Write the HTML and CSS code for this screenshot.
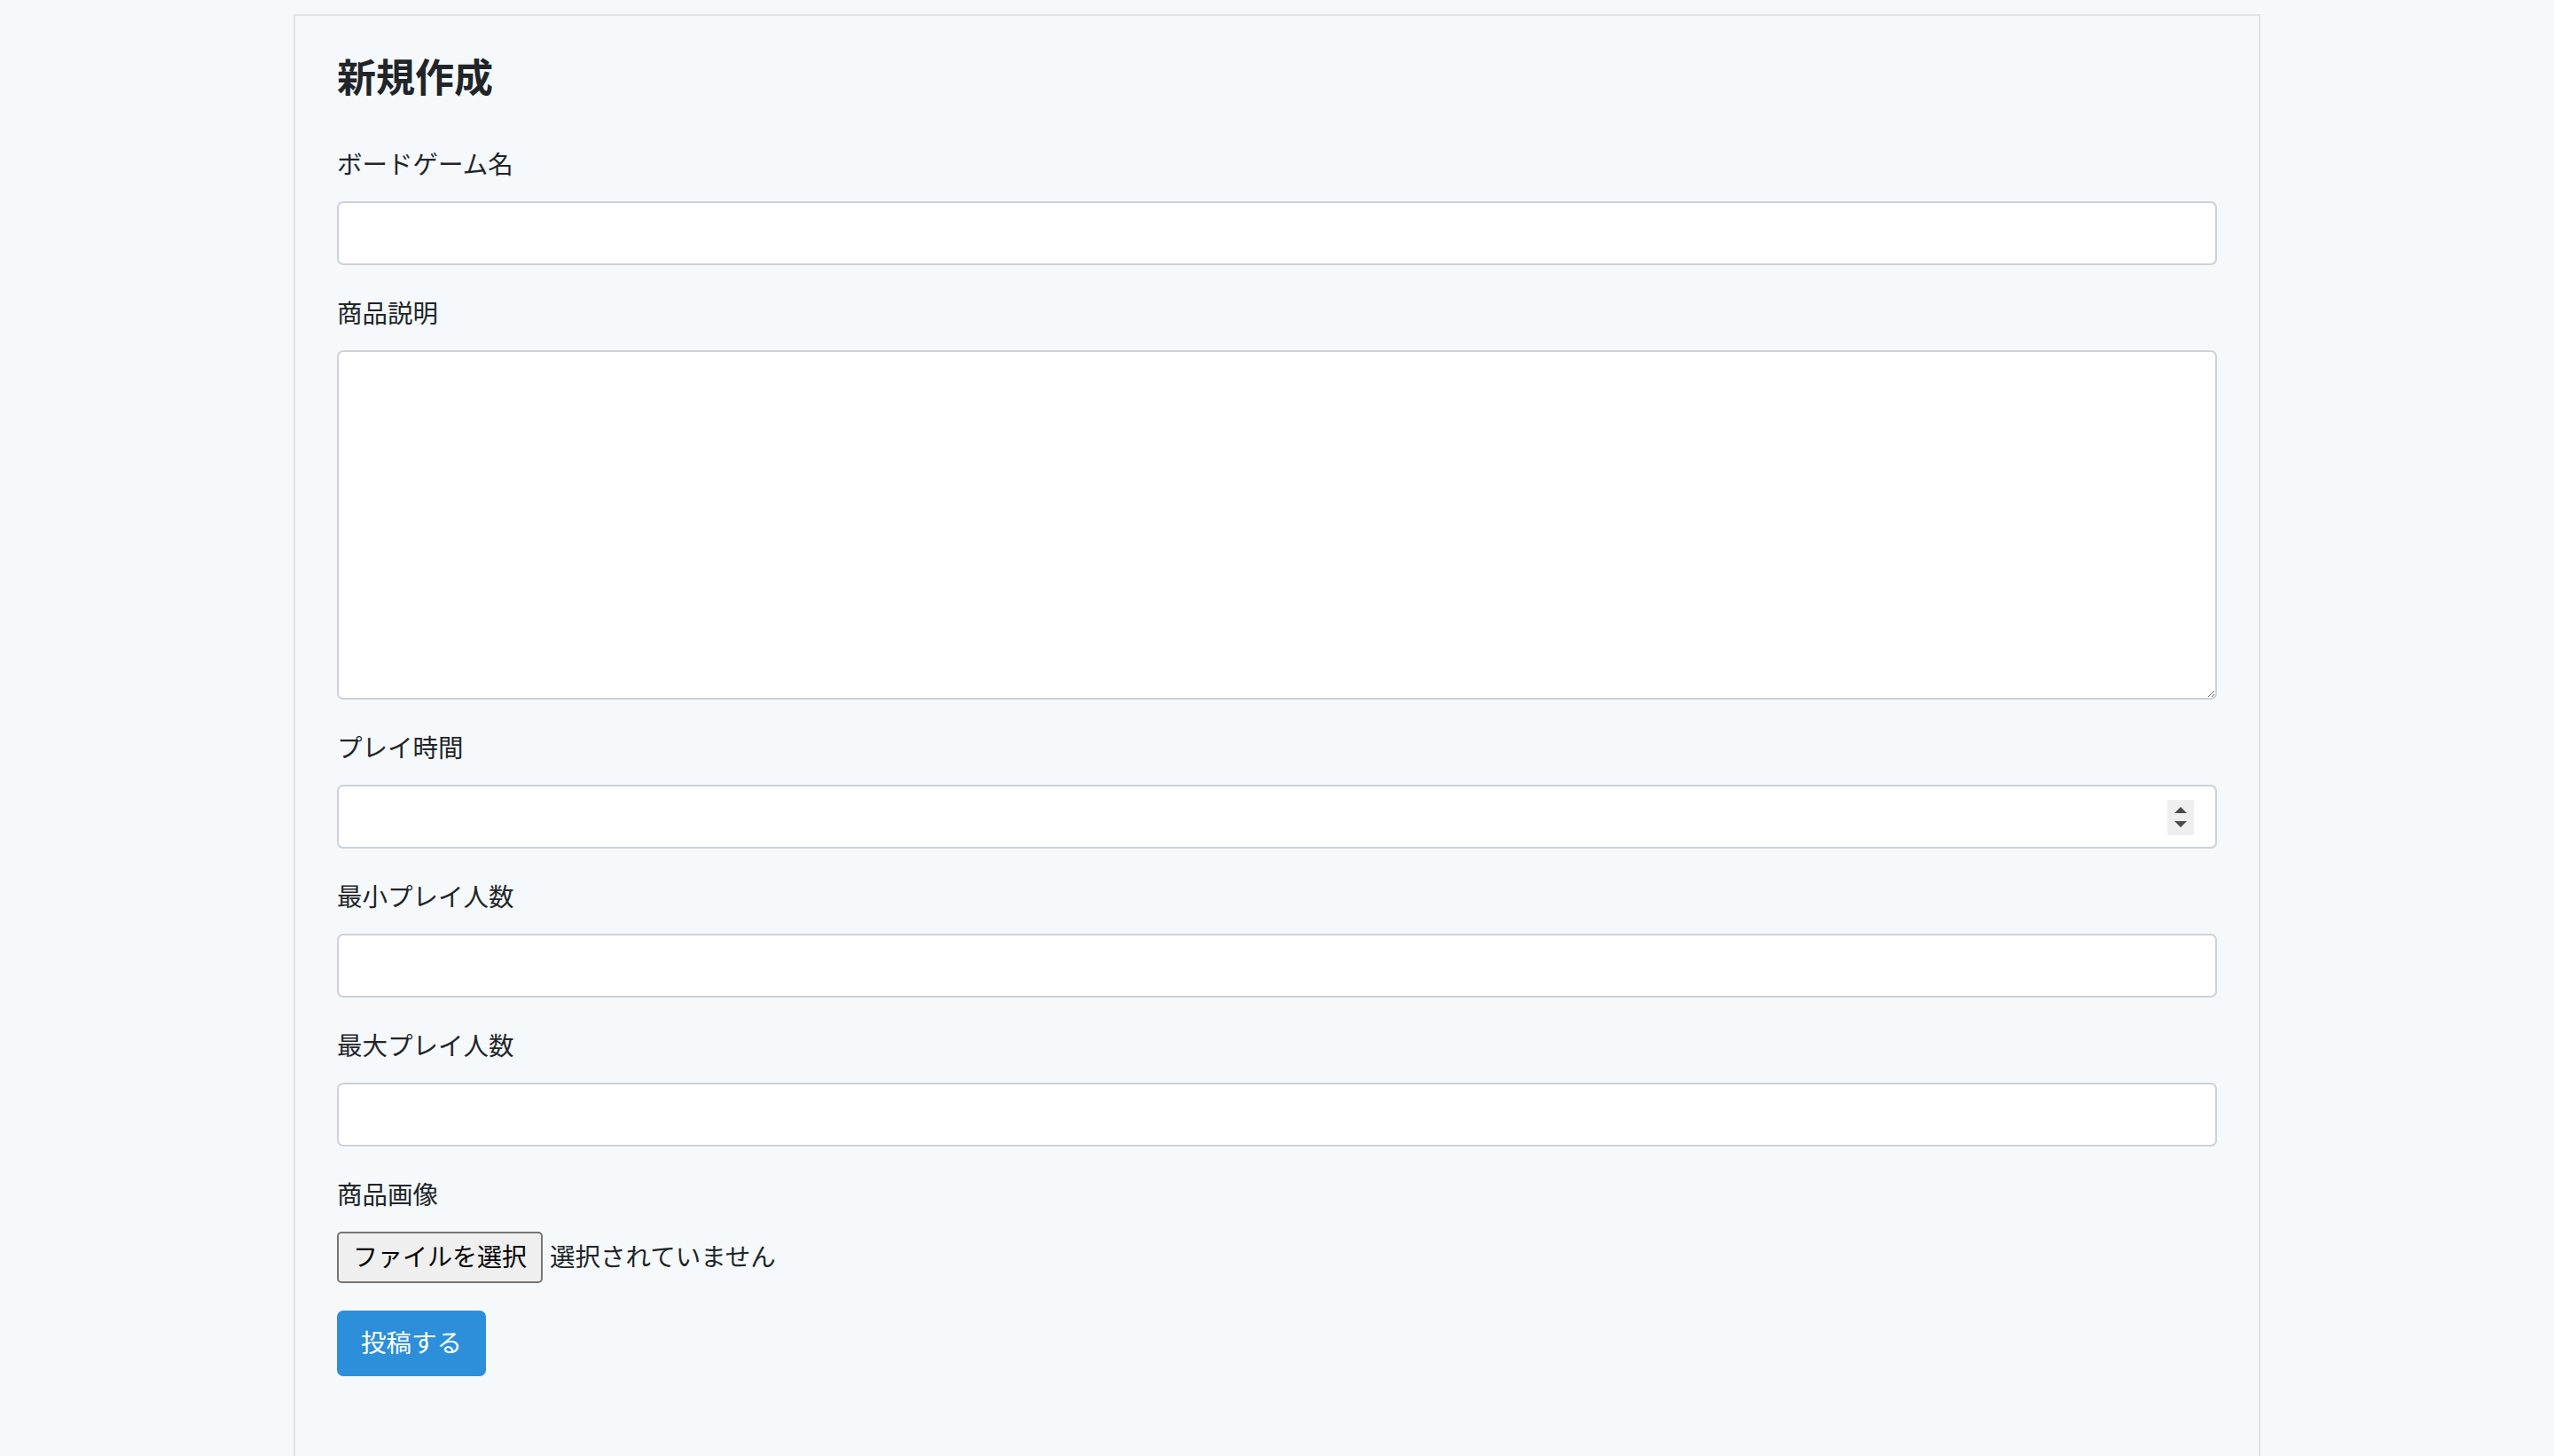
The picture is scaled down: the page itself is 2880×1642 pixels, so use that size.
FILE: index.html
```html
<!DOCTYPE html>
<html lang="ja">
<head>
<meta charset="utf-8">
<title>新規作成</title>
<link rel="stylesheet" href="styles.css">
</head>
<body>
<main class="panel">
  <h2 class="panel-title">新規作成</h2>
  <form class="game-form">
    <div class="field">
      <label class="field-label" for="name">ボードゲーム名</label>
      <input class="text-input" id="name" type="text">
    </div>
    <div class="field">
      <label class="field-label" for="desc">商品説明</label>
      <textarea class="text-area" id="desc"></textarea>
    </div>
    <div class="field">
      <label class="field-label" for="time">プレイ時間</label>
      <div class="number-wrap">
        <input class="text-input number-input" id="time" type="number">
        <span class="spinner" aria-hidden="true">
          <svg width="14" height="24" viewBox="0 0 14 24"><path d="M0 7 L7 0 L14 7 Z M0 16 L14 16 L7 23 Z" fill="#4b4b4b"/></svg>
        </span>
      </div>
    </div>
    <div class="field">
      <label class="field-label" for="min">最小プレイ人数</label>
      <input class="text-input" id="min" type="text">
    </div>
    <div class="field">
      <label class="field-label" for="max">最大プレイ人数</label>
      <input class="text-input" id="max" type="text">
    </div>
    <div class="field">
      <span class="field-label">商品画像</span>
      <div class="file-row">
        <label class="file-btn" for="image">ファイルを選択</label>
        <span class="file-status">選択されていません</span>
        <input class="file-hidden" id="image" type="file">
      </div>
    </div>
    <button class="submit-btn" type="button">投稿する</button>
  </form>
</main>
</body>
</html>
```
FILE: styles.css
```css
* {
  box-sizing: border-box;
}

html, body {
  margin: 0;
  padding: 0;
  background: #f5f9fc;
}

body {
  font-family: "Noto Sans CJK JP", "Noto Sans", sans-serif;
  color: #212529;
  overflow: hidden;
}

.panel {
  width: 2218px;
  margin: 16px auto 0;
  border: 2px solid #dfe3e7;
  background: #f5f9fc;
  padding: 41px 47px 200px;
}

.panel-title {
  margin: 0 0 50px;
  font-size: 44px;
  line-height: 53px;
  font-weight: 700;
  color: #212529;
}

.game-form {
  display: flex;
  flex-direction: column;
}

.field {
  display: flex;
  flex-direction: column;
  margin-bottom: 31px;
}

.field-label {
  display: block;
  font-size: 28.5px;
  line-height: 44px;
  margin-bottom: 21px;
  color: #212529;
}

.text-input,
.text-area {
  display: block;
  width: 100%;
  height: 72px;
  border: 2px solid #cdd2d8;
  border-radius: 7px;
  background: #ffffff;
  font-family: inherit;
  font-size: 28px;
  padding: 0 22px;
  color: #212529;
  outline: none;
}

.text-area {
  height: 394px;
  padding: 12px 22px;
  resize: vertical;
}

.number-wrap {
  position: relative;
}

.number-input::-webkit-inner-spin-button,
.number-input::-webkit-outer-spin-button {
  -webkit-appearance: none;
  margin: 0;
}

.spinner {
  position: absolute;
  right: 26px;
  top: 17px;
  width: 30px;
  height: 40px;
  background: #efefef;
  border-radius: 3px;
  display: flex;
  align-items: center;
  justify-content: center;
}

.spinner svg {
  display: block;
}

.file-row {
  display: flex;
  align-items: center;
}

.file-btn {
  display: inline-flex;
  align-items: center;
  height: 58px;
  padding: 0 16px 4px;
  border: 2px solid #767676;
  border-radius: 5px;
  background: #efefef;
  color: #000000;
  font-size: 28px;
  line-height: 1;
}

.file-status {
  margin-left: 8px;
  padding-bottom: 4px;
  font-size: 28.5px;
  line-height: 1;
  color: #212529;
}

.file-hidden {
  display: none;
}

.submit-btn {
  align-self: flex-start;
  height: 74px;
  padding: 0 27px 3px;
  border: none;
  border-radius: 7px;
  background: #2d8fd9;
  color: #ffffff;
  font-family: inherit;
  font-size: 28.5px;
  line-height: 1;
}
```
